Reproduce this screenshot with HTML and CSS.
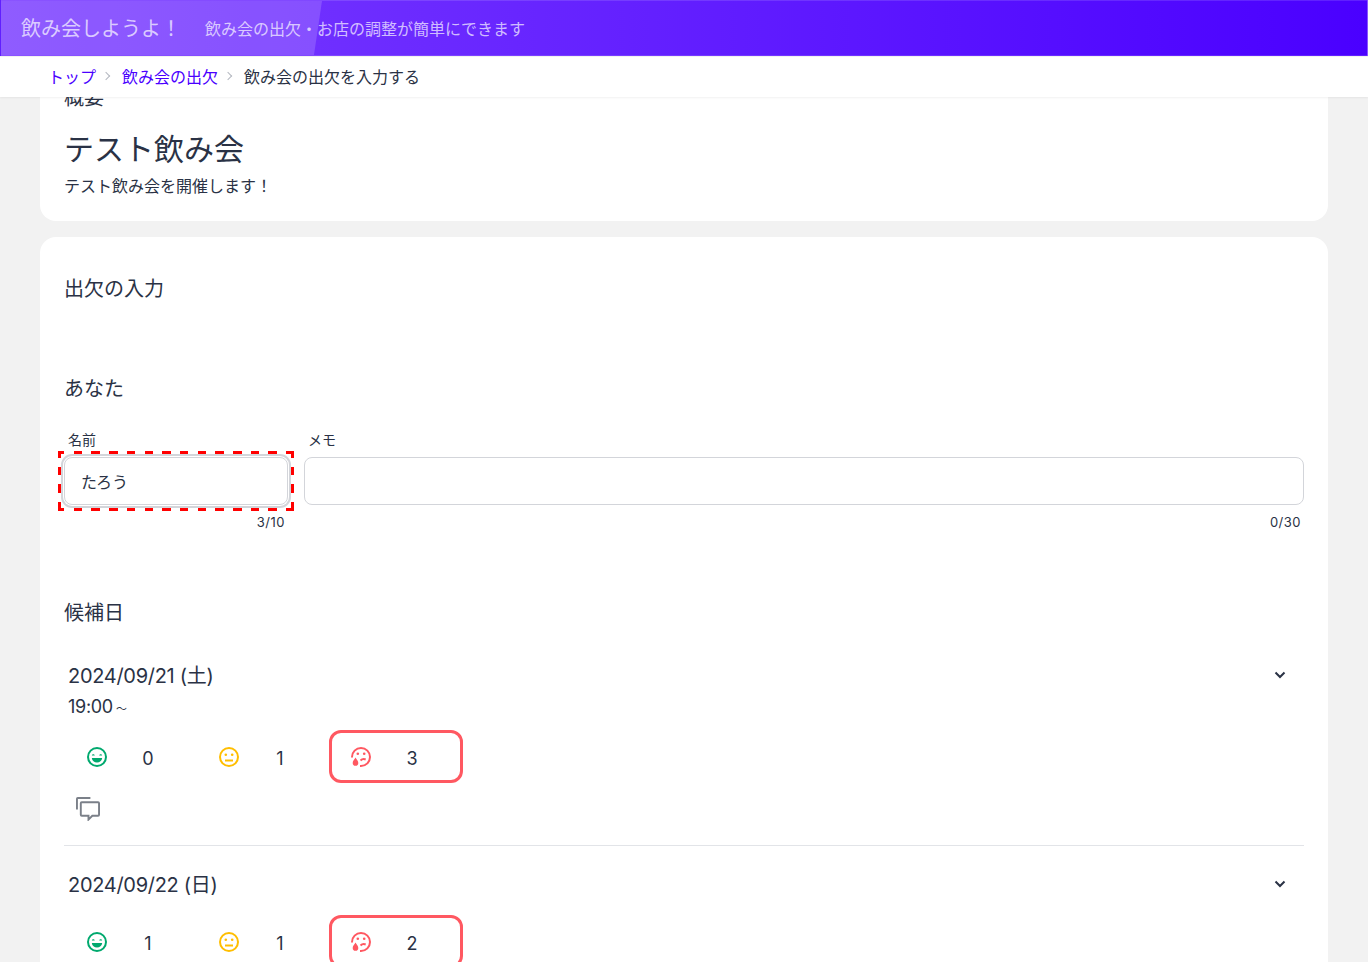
FILE: index.html
```html
<!DOCTYPE html>
<html lang="ja">
<head>
<meta charset="utf-8">
<title>飲み会しようよ！</title>
<link rel="stylesheet" href="styles.css">
</head>
<body>
<svg class="defs" width="0" height="0" aria-hidden="true">
  <symbol id="happy" viewBox="0 0 24 24"><circle cx="12" cy="12" r="9" fill="none" stroke="currentColor" stroke-width="2"/><path d="M6.800 10.400c.4-1.600 2.600-1.600 3 0zM14.200 10.400c.4-1.600 2.600-1.600 3 0zM6.800 13h10.400c-.4 2.800-2.400 4.500-5.200 4.500S7.200 15.800 6.800 13z" fill="currentColor"/></symbol>
  <symbol id="neutral" viewBox="0 0 24 24"><circle cx="12" cy="12" r="9" fill="none" stroke="currentColor" stroke-width="2"/><circle cx="8.800" cy="9.800" r="1.300" fill="currentColor"/><circle cx="15.200" cy="9.800" r="1.300" fill="currentColor"/><path d="M8 15.500h8" stroke="currentColor" stroke-width="2"/></symbol>
  <symbol id="sad" viewBox="0 0 24 24"><path d="M3 12.500V12a9 9 0 1 1 9 9h-1" fill="none" stroke="currentColor" stroke-width="2"/><circle cx="8.800" cy="8.800" r="1.300" fill="currentColor"/><circle cx="15.200" cy="8.800" r="1.300" fill="currentColor"/><path d="M11.500 15.500c1.400-1.300 3.400-1.700 5.200-1" fill="none" stroke="currentColor" stroke-width="2"/><path d="M6.500 12.500c1.200 1.900 2.800 3.600 2.800 5.400a2.800 2.800 0 0 1-5.600 0c0-1.800 1.600-3.500 2.800-5.400z" fill="currentColor"/></symbol>
  <symbol id="comment" viewBox="1 1 25 25"><path d="M2 14V2.800a.8.8 0 0 1 .8-.8H16" fill="none" stroke="currentColor" stroke-width="2"/><path d="M7 6.500h17a1 1 0 0 1 1 1v12a1 1 0 0 1-1 1h-6l-4 4v-4H7a1 1 0 0 1-1-1v-12a1 1 0 0 1 1-1z" fill="none" stroke="currentColor" stroke-width="2"/></symbol>
  <symbol id="chev" viewBox="0 0 12 8"><path d="M1.500 1.500L6 6l4.500-4.500" fill="none" stroke="currentColor" stroke-width="2"/></symbol>
</svg>
<header class="topbar">
  <div class="topbar-sheen"></div>
  <span class="brand">飲み会しようよ！</span>
  <span class="tagline">飲み会の出欠・お店の調整が簡単にできます</span>
</header>
<nav class="crumbs">
  <a class="crumb-link" href="#">トップ</a><span class="sep"></span>
  <a class="crumb-link" href="#">飲み会の出欠</a><span class="sep"></span>
  <span>飲み会の出欠を入力する</span>
</nav>
<main class="page">
  <section class="card card-summary">
    <h2 class="eyebrow">概要</h2>
    <h1 class="title">テスト飲み会</h1>
    <p class="desc">テスト飲み会を開催します！</p>
  </section>
  <section class="card card-form">
    <h2 class="section-title">出欠の入力</h2>
    <h3 class="section-title you">あなた</h3>
    <div class="fields">
      <div class="field field-name">
        <label class="field-label">名前</label>
        <div class="input highlighted">たろう</div>
        <div class="counter">3/10</div>
      </div>
      <div class="field field-memo">
        <label class="field-label">メモ</label>
        <div class="input"></div>
        <div class="counter">0/30</div>
      </div>
    </div>
    <h3 class="section-title dates">候補日</h3>
    <article class="date date-first">
      <div class="date-head">
        <div class="date-title">2024/09/21 (土)</div>
        <svg class="chev"><use href="#chev"/></svg>
      </div>
      <div class="date-time">19:00<span class="tilde">～</span></div>
      <div class="votes">
        <div class="vote"><svg class="face happy"><use href="#happy"/></svg><span class="count">0</span></div>
        <div class="vote"><svg class="face neutral"><use href="#neutral"/></svg><span class="count">1</span></div>
        <div class="vote picked"><svg class="face sad"><use href="#sad"/></svg><span class="count">3</span></div>
      </div>
      <svg class="comment"><use href="#comment"/></svg>
    </article>
    <article class="date date-second">
      <div class="date-head">
        <div class="date-title">2024/09/22 (日)</div>
        <svg class="chev"><use href="#chev"/></svg>
      </div>
      <div class="votes">
        <div class="vote"><svg class="face happy"><use href="#happy"/></svg><span class="count">1</span></div>
        <div class="vote"><svg class="face neutral"><use href="#neutral"/></svg><span class="count">1</span></div>
        <div class="vote picked"><svg class="face sad"><use href="#sad"/></svg><span class="count">2</span></div>
      </div>
    </article>
  </section>
</main>
</body>
</html>
```
FILE: styles.css
```css
* { box-sizing: border-box; }
html, body { margin: 0; height: 962px; overflow: hidden; }
body {
  background: #f2f2f2;
  color: #2a3245;
  font-family: "Inter", "Noto Sans CJK JP", sans-serif;
  font-size: 16px;
  display: flex;
  flex-direction: column;
}
.defs { position: absolute; }
h1, h2, h3, p { margin: 0; font-weight: 400; }
.topbar {
  position: relative;
  height: 56px;
  flex: none;
  display: flex;
  align-items: center;
  padding-left: 20px;
  background: linear-gradient(90deg, #7a3dff 0%, #4a00ff 100%);
  color: rgba(255,255,255,.7);
  border: 1px solid rgba(255,255,255,.12);
  overflow: hidden;
}
.topbar-sheen {
  position: absolute;
  left: 0; top: 0; bottom: 0;
  width: 321px;
  background: rgba(255,255,255,.16);
  clip-path: polygon(0 0, 100% 0, 97.500% 100%, 0 100%);
}
.brand { position: relative; font-size: 20px; line-height: 28px; margin-top: 2px; }
.tagline { position: relative; font-size: 16px; margin-left: 24px; }
.crumbs {
  position: relative;
  z-index: 2;
  height: 40px;
  flex: none;
  display: flex;
  align-items: center;
  padding: 0 0 2px 48px;
  background: #fff;
  box-shadow: 0 1px 2px rgba(0,0,0,.06);
  margin-top: 1px;
  font-size: 16px;
}
.crumb-link { color: #4a00ff; text-decoration: none; }
.sep {
  width: 6px; height: 6px;
  margin: 0 13px 0 7px;
  border-top: 1px solid #b4b8c0;
  border-right: 1px solid #b4b8c0;
  transform: rotate(45deg);
}
.page {
  flex: 1;
  padding: 0 40px;
  display: flex;
  flex-direction: column;
  gap: 16px;
  overflow: hidden;
}
.card { background: #fff; border-radius: 16px; padding: 0 24px; }
.card-summary {
  flex: none;
  height: 124px;
  border-radius: 0 0 16px 16px;
  overflow: hidden;
}
.eyebrow { font-size: 20px; line-height: 24px; margin-top: -11px; }
.title { font-size: 30px; line-height: 40px; margin-top: 19px; }
.desc { font-size: 16px; line-height: 24px; margin-top: 5px; }
.card-form { flex: none; height: 800px; padding-top: 36px; overflow: hidden; }
.section-title { font-size: 20px; line-height: 32px; }
.you { margin-top: 68px; }
.fields { display: flex; gap: 16px; margin-top: 25px; }
.field-name { width: 224px; }
.field-memo { flex: 1; }
.field-label { display: block; font-size: 14px; line-height: 20px; padding-left: 4px; margin-bottom: 7px; }
.input {
  position: relative;
  height: 48px;
  border: 1px solid #d3d5da;
  border-radius: 8px;
  padding: 1px 0 0 16px;
  line-height: 46px;
  background: #fff;
}
.highlighted { box-shadow: 0 0 0 1px #fff, 0 0 0 3px #d3d5da; }
.highlighted::after {
  content: "";
  position: absolute;
  inset: -7px;
  background:
    repeating-linear-gradient(90deg, #f00 0 6.500px, transparent 6.500px 15.700px, #f00 15.700px 17.700px) left top / 100% 3px no-repeat,
    repeating-linear-gradient(90deg, #f00 0 6.500px, transparent 6.500px 15.700px, #f00 15.700px 17.700px) left bottom / 100% 3px no-repeat,
    repeating-linear-gradient(180deg, #f00 0 6.500px, transparent 6.500px 15.700px, #f00 15.700px 17.700px) left top / 3px 100% no-repeat,
    repeating-linear-gradient(180deg, #f00 0 6.500px, transparent 6.500px 15.700px, #f00 15.700px 17.700px) right top / 3px 100% no-repeat;
}
.counter { font-size: 13px; line-height: 16px; text-align: right; padding-right: 3px; margin-top: 9px; letter-spacing: .5px; }
.dates { margin-top: 67px; }
.date { padding: 0 4px; }
.date-first { margin-top: 31px; padding-bottom: 24px; border-bottom: 1px solid #e2e4e8; }
.date-second { padding-top: 23px; }
.date-head { display: flex; justify-content: space-between; align-items: center; height: 32px; padding-right: 14px; }
.date-title { font-size: 20px; line-height: 32px; letter-spacing: -.3px; }
.chev { width: 12px; height: 8px; margin-bottom: 2px; color: #2a3245; }
.date-time { font-size: 18px; line-height: 24px; margin-top: 3px; letter-spacing: -.3px; }
.tilde { font-size: 11px; margin-left: 3px; }
.votes { display: flex; margin: 9px 0 0 -3px; }
.date-second .votes { margin-top: 14px; }
.vote {
  width: 132px;
  height: 53px;
  display: flex;
  align-items: center;
  padding-left: 17px;
  font-size: 18px;
  border-radius: 12px;
  border: 3px solid transparent;
}
.count { width: 24px; margin: 4px 0 0 27px; text-align: center; }
.picked { width: 134px; border-color: #ff5861; }
.face { width: 24px; height: 24px; flex: none; }
.happy { color: #00a96e; }
.neutral { color: #ffbe00; }
.sad { color: #ff5861; }
.comment { display: block; width: 24px; height: 24px; color: #7b8089; margin: 14px 0 0 8px; }
```
